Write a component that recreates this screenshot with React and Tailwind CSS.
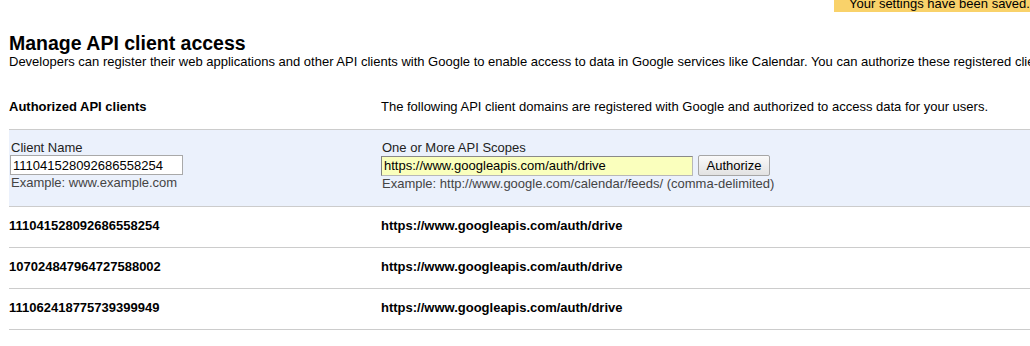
import React from "react";

const clients = [
  { id: "111041528092686558254", scope: "https://www.googleapis.com/auth/drive" },
  { id: "107024847964727588002", scope: "https://www.googleapis.com/auth/drive" },
  { id: "111062418775739399949", scope: "https://www.googleapis.com/auth/drive" },
];

export default function App() {
  return (
    <div className="relative h-[346px] w-[1030px] overflow-hidden bg-white text-[13px] text-black [font-family:'Liberation_Sans',Arial,sans-serif]">
      {/* saved notice, pinned to the top edge */}
      <div className="absolute left-[834px] top-0 h-[12px] w-[240px] overflow-hidden bg-[#f9d26a] pl-[15px]">
        <div className="-mt-[4px] whitespace-nowrap leading-[15px]">Your settings have been saved.</div>
      </div>

      <div className="w-[1400px] pl-[9px]">
        <h1 className="pt-[32px] text-[19.5px] font-bold leading-[22px]">Manage API client access</h1>
        <p className="whitespace-nowrap leading-[15px]">
          Developers can register their web applications and other API clients with Google to enable access to data in Google services like Calendar. You can authorize these registered clients to access your user data without your users having to individually give consent or their passwords.
        </p>

        <div className="mt-[30px] grid grid-cols-[372px_1fr] pb-[15px] leading-[15px]">
          <div className="font-bold">Authorized API clients</div>
          <div>The following API client domains are registered with Google and authorized to access data for your users.</div>
        </div>

        <div className="grid grid-cols-[372px_1fr] border-y border-[#cccccc] bg-[#ebf1fc] pb-[15px] pt-[10px] leading-[15px]">
          <div className="flex flex-col items-start pl-[1px]">
            <label className="pl-[1px] text-[#222]">Client Name</label>
            <input
              readOnly
              value="111041528092686558254"
              className="h-[20px] w-[173px] border border-[#a9a9a9] bg-white px-[2px] text-[13px] text-black outline-none"
            />
            <div className="pl-[1px] text-[#444]">Example: www.example.com</div>
          </div>
          <div className="flex flex-col items-start">
            <label className="pl-[1px] text-[#222]">One or More API Scopes</label>
            <div className="flex items-center">
              <input
                readOnly
                value="https://www.googleapis.com/auth/drive"
                className="h-[20px] w-[312px] border border-[#b8b8b8] border-l-[#7f7f7f] border-t-[#8a8a8a] bg-[#faffbd] px-[2px] text-[13px] text-black outline-none"
              />
              <button className="ml-[5px] h-[21px] w-[72px] rounded-[2px] border border-[#a6a6a6] bg-gradient-to-b from-[#fafafa] to-[#e2e2e2] text-[13px] leading-[15px] text-black">
                Authorize
              </button>
            </div>
            <div className="pl-[1px] text-[#444]">Example: http://www.google.com/calendar/feeds/ (comma-delimited)</div>
          </div>
        </div>

        {clients.map((c) => (
          <div key={c.id} className="grid grid-cols-[372px_1fr] border-b border-[#cccccc] pb-[14px] pt-[11px] font-bold leading-[15px]">
            <div>{c.id}</div>
            <div>{c.scope}</div>
          </div>
        ))}
      </div>
    </div>
  );
}
